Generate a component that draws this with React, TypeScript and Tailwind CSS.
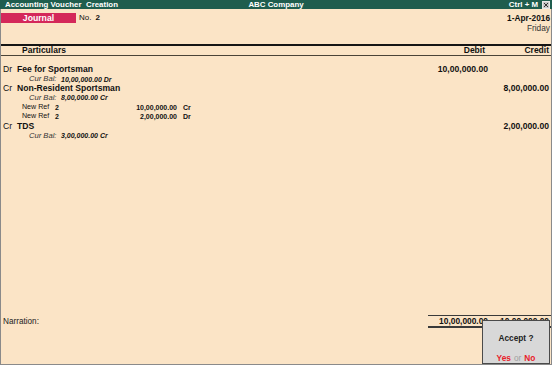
import React from "react";

const F = { fontFamily: '"Liberation Sans", Arial, sans-serif' };

function MainRow({ side, name, debit, credit }: { side: string; name: string; debit?: string; credit?: string }) {
  return (
    <div className="flex h-[9.4px] items-center leading-none text-[8.6px]">
      <div className="flex flex-1 items-center pl-[2px]">
        <span className="w-[14px]">{side}</span>
        <span className="font-bold">{name}</span>
      </div>
      <div className="w-[62px] text-right font-bold">{debit}</div>
      <div className="w-[61px] text-right font-bold">{credit}</div>
      <div className="w-[2px]" />
    </div>
  );
}

function CurBal({ amount }: { amount: string }) {
  return (
    <div className="flex h-[9.4px] items-center leading-none pl-[28px] italic">
      <span className="w-[32px] text-[7.6px] text-[#333]">Cur Bal:</span>
      <span className="text-[7px] font-bold">{amount}</span>
    </div>
  );
}

function RefRow({ amount, dc }: { amount: string; dc: string }) {
  return (
    <div className="flex h-[9.4px] items-center leading-none pl-[21px] text-[7px]">
      <span className="w-[33px] text-[7.1px]">New Ref</span>
      <span className="w-[10px] font-bold">2</span>
      <span className="w-[112px] text-right font-bold">{amount}</span>
      <span className="ml-[6px] font-bold">{dc}</span>
    </div>
  );
}

export default function App() {
  return (
    <div className="relative flex h-[365px] w-[552px] flex-col overflow-hidden bg-[#fbe4c6] text-[#111]" style={F}>
      {/* title bar */}
      <div className="grid h-[9px] shrink-0 grid-cols-3 items-center bg-[#1f5d4e] text-[7.9px] font-bold leading-none text-white">
        <div className="pl-[5px]">Accounting Voucher&nbsp; Creation</div>
        <div className="text-center">ABC Company</div>
        <div className="flex items-center justify-end gap-[4px] pr-[2px]">
          <span>Ctrl + M</span>
          <svg width="8" height="8" viewBox="0 0 8 8" className="block">
            <rect x="0.5" y="0.5" width="7" height="7" fill="#c8c8c8" stroke="#e8e8e8" />
            <path d="M2 2 L6 6 M6 2 L2 6" stroke="#333" strokeWidth="1" />
          </svg>
        </div>
      </div>

      <div className="flex flex-1 flex-col border-x border-b border-[#8a8a8a]">
        {/* header */}
        <div className="flex h-[35px] shrink-0 justify-between">
          <div className="mt-[4px] flex h-[10px] items-start">
            <div className="flex h-[10px] w-[75px] items-center justify-center bg-[#d4285a] text-[8.7px] font-bold leading-none text-white">
              Journal
            </div>
            <div className="ml-[3px] flex h-[10px] items-center gap-[4px] text-[8px] leading-none">
              <span>No.</span>
              <span className="font-bold">2</span>
            </div>
          </div>
          <div className="mt-[4px] flex flex-col items-end pr-[1px] text-[8.3px] leading-none">
            <div className="flex h-[10px] items-center font-bold">1-Apr-2016</div>
            <div className="flex h-[10px] items-center text-[#333]">Friday</div>
          </div>
        </div>

        {/* column header */}
        <div className="flex h-[12px] shrink-0 items-center border-t-2 border-b border-t-[#151515] border-b-[#4a4438] text-[8.5px] font-bold leading-none">
          <div className="flex-1 pl-[21px]">Particulars</div>
          <div className="w-[62px] pr-[3px] text-right">Debit</div>
          <div className="w-[61px] text-right">Credit</div>
          <div className="w-[2px]" />
        </div>

        {/* body */}
        <div className="flex flex-1 flex-col pt-[9px]">
          <MainRow side="Dr" name="Fee for Sportsman" debit="10,00,000.00" />
          <CurBal amount="10,00,000.00 Dr" />
          <MainRow side="Cr" name="Non-Resident Sportsman" credit="8,00,000.00" />
          <CurBal amount="8,00,000.00 Cr" />
          <RefRow amount="10,00,000.00" dc="Cr" />
          <RefRow amount="2,00,000.00" dc="Dr" />
          <MainRow side="Cr" name="TDS" credit="2,00,000.00" />
          <CurBal amount="3,00,000.00 Cr" />
        </div>

        {/* footer */}
        <div className="flex h-[49px] shrink-0 items-start">
          <div className="flex h-[13px] flex-1 items-center pl-[2px] pt-[1px] text-[8.2px] leading-none text-[#222]">
            Narration:
          </div>
          <div className="flex w-[123px] flex-col">
            <div className="flex h-[13px] items-center border-t border-b-2 border-[#3a3a3a] text-[8.4px] font-bold leading-none">
              <div className="w-[60px] text-right">10,00,000.00</div>
              <div className="w-[61px] text-right">10,00,000.00</div>
              <div className="w-[2px]" />
            </div>
          </div>
        </div>
      </div>

      {/* Accept dialog */}
      <div className="absolute left-[482px] top-[320px] flex h-[44px] w-[68px] flex-col items-center border border-[#4a4a4a] bg-[#d8d8d8] leading-none">
        <div className="mt-[13px] text-[8.3px] font-bold text-[#222]">Accept ?</div>
        <div className="mt-[12px] flex items-center gap-[3px] text-[8.3px]">
          <span className="font-bold text-[#e8202a]">Yes</span>
          <span className="text-[#a0a0a0]">or</span>
          <span className="font-bold text-[#e8202a]">No</span>
        </div>
      </div>
    </div>
  );
}
